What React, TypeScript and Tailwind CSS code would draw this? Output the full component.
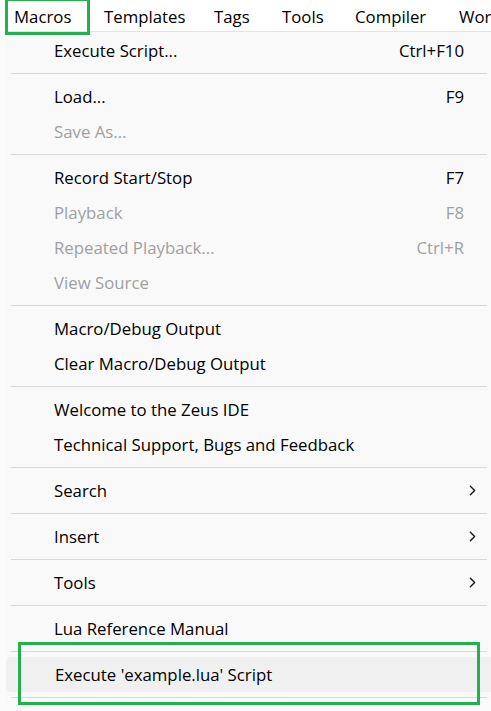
import { ChevronRight } from "lucide-react";

type Item =
  | { kind: "sep" }
  | {
      kind: "item";
      label: string;
      shortcut?: string;
      disabled?: boolean;
      submenu?: boolean;
      active?: boolean;
    };

const menuBar = [
  { label: "Macros", w: "w-[90px]" },
  { label: "Templates", w: "w-[110px]" },
  { label: "Tags", w: "w-[68px]" },
  { label: "Tools", w: "w-[73px]" },
  { label: "Compiler", w: "w-[104px]" },
  { label: "Workspace", w: "w-[110px]" },
];

const items: Item[] = [
  { kind: "item", label: "Execute Script...", shortcut: "Ctrl+F10" },
  { kind: "sep" },
  { kind: "item", label: "Load...", shortcut: "F9" },
  { kind: "item", label: "Save As...", disabled: true },
  { kind: "sep" },
  { kind: "item", label: "Record Start/Stop", shortcut: "F7" },
  { kind: "item", label: "Playback", shortcut: "F8", disabled: true },
  { kind: "item", label: "Repeated Playback...", shortcut: "Ctrl+R", disabled: true },
  { kind: "item", label: "View Source", disabled: true },
  { kind: "sep" },
  { kind: "item", label: "Macro/Debug Output" },
  { kind: "item", label: "Clear Macro/Debug Output" },
  { kind: "sep" },
  { kind: "item", label: "Welcome to the Zeus IDE" },
  { kind: "item", label: "Technical Support, Bugs and Feedback" },
  { kind: "sep" },
  { kind: "item", label: "Search", submenu: true },
  { kind: "sep" },
  { kind: "item", label: "Insert", submenu: true },
  { kind: "sep" },
  { kind: "item", label: "Tools", submenu: true },
  { kind: "sep" },
  { kind: "item", label: "Lua Reference Manual" },
  { kind: "sep" },
  { kind: "item", label: "Execute 'example.lua' Script", active: true },
  { kind: "sep" },
];

export default function App() {
  return (
    <div className="relative w-[491px] h-[711px] overflow-hidden bg-[#fbfbfb] text-[16.8px] text-black font-['Open_Sans',sans-serif]">
      {/* menu bar */}
      <div className="flex h-[31px] items-center overflow-hidden bg-white pl-[14px] pt-[3px] whitespace-nowrap">
        {menuBar.map((m) => (
          <div key={m.label} className={m.w + " shrink-0 leading-none"}>
            {m.label}
          </div>
        ))}
      </div>

      {/* dropdown */}
      <div className="ml-[5px] border-t border-[#e4e4e4] bg-[#f9f9f9] pt-[1px]">
        {items.map((it, i) =>
          it.kind === "sep" ? (
            <div key={i} className="flex h-[11px] items-center pl-[6px] pr-[4px]">
              <div className="h-px w-full bg-[#d9d9d9]" />
            </div>
          ) : (
            <div
              key={i}
              className={
                "flex h-[35px] items-center pl-[49px] pr-[27px] whitespace-nowrap " +
                (it.active ? "ml-px rounded-l-[5px] bg-[#f0f0f0] " : "") +
                (it.disabled ? "text-[#a0a0a0]" : "text-black")
              }
            >
              <span className="flex-1">{it.label}</span>
              {it.shortcut && <span>{it.shortcut}</span>}
              {it.submenu && (
                <ChevronRight className="-mr-[17px] h-[17px] w-[17px] text-[#1a1a1a]" strokeWidth={2} />
              )}
            </div>
          )
        )}
      </div>

      {/* annotation boxes */}
      <div className="absolute left-[5px] top-[-2px] h-[37px] w-[85px] border-[3px] border-[#22b14c]" />
      <div className="absolute left-[18px] top-[642px] h-[63px] w-[462px] border-[3px] border-[#22b14c]" />
    </div>
  );
}
